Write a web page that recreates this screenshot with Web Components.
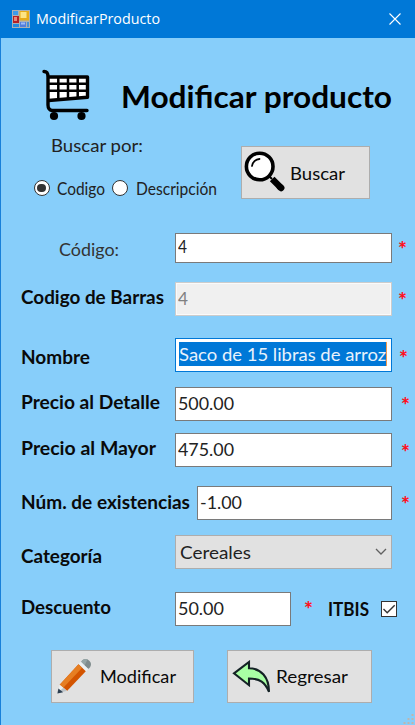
<!DOCTYPE html>
<html lang="es">
<head>
<meta charset="utf-8">
<title>ModificarProducto</title>
<style>
html,body{margin:0;height:100%;overflow:hidden;background:#87cefa}
body{font-family:Lato,"Open Sans",sans-serif;font-size:18px;color:#0a0a0a}
</style>
</head>
<body>
<product-window></product-window>
<script>
const define=(name,html,setup)=>{
  const tpl=document.createElement('template');
  tpl.innerHTML=html;
  customElements.define(name,class extends HTMLElement{
    constructor(){super();this.attachShadow({mode:'open'}).append(tpl.content.cloneNode(true));}
    connectedCallback(){if(setup)setup(this,this.shadowRoot);}
  });
};

/* Single-line text condensed or widened to the width in its "w" attribute. */
define('fit-label',`<style>
:host{display:block;flex:none;height:20px;line-height:20px;white-space:nowrap}
:host([bold]){font-weight:700}
span{display:inline-block;transform-origin:0 50%}
</style><span><slot></slot></span>`,(el,root)=>{
  const w=+el.getAttribute('w'),s=root.querySelector('span');
  el.style.width=w+'px';
  const n=s.offsetWidth?s.getBoundingClientRect().width:w;
  s.style.transform='scaleX('+w/n+')';
});

define('required-mark',`<style>
:host{display:block;flex:none;width:9px;height:20px;line-height:22px;color:#ff0f1c;font-size:21px;font-weight:900;text-align:center}
</style>*`);

define('text-field',`<style>
:host{display:flex;flex:none;box-sizing:border-box;height:34px;width:217px;border:1px solid #7a7a7a;background:#fff;padding:var(--pt,5px) 0 0 2px;color:#222}
:host([disabled]){background:#f0f0f0;border-color:#ccc;box-shadow:inset 0 0 0 1px #fafafa;color:#808080}
:host([selected]){border-color:#0078d7;padding:3px 0 0 3px}
:host([selected]) div{background:#0078d7;color:#e8f2fc;height:21px;padding:2px 0 1px;border-right:1px solid #f09a50}
</style><div><slot></slot></div>`);

define('combo-box',`<style>
:host{display:flex;flex:none;justify-content:space-between;box-sizing:border-box;height:34px;width:217px;border:1px solid #adadad;background:#e1e1e1;padding:6px 4px 0 4px;color:#222}
svg{margin-top:5px}
</style><slot></slot><svg width="12" height="10" viewBox="0 0 12 10"><path d="M1 2l5 5 5-5" fill="none" stroke="#606060" stroke-width="1.3"/></svg>`);

define('push-button',`<style>
:host{display:flex;flex:none;box-sizing:border-box;height:53px;border:1px solid #adadad;background:#e1e1e1}
</style><slot></slot>`);

define('radio-dot',`<style>
:host{display:block;flex:none;box-sizing:border-box;width:16px;height:16px;border:1.4px solid #333;border-radius:50%;background:#fff;padding:2.800px}
div{border-radius:50%;height:100%}
:host([checked]) div{background:#333}
</style><div></div>`);

define('check-box',`<style>
:host{display:block;flex:none;box-sizing:border-box;width:16px;height:16px;border:1px solid #333;background:#fff}
svg{display:block}
</style><svg width="14" height="14" viewBox="0 0 14 14"><path d="M1.500 7l3.700 3.700L12.700 3.200" fill="none" stroke="#333" stroke-width="1.400"/></svg>`);

define('form-row',`<style>
:host{display:flex;flex:none;align-items:flex-start;box-sizing:border-box}
</style><slot></slot>`);

define('title-bar',`<style>
:host{display:flex;flex:none;box-sizing:border-box;height:38px;background:#0078d7;color:#fff;align-items:center;padding:0 14px 0 12px;font-family:"Open Sans","Noto Sans",sans-serif;font-size:15px}
fit-label{margin:-2px auto 0 6px}
svg{display:block;flex:none}
</style>
<svg width="18" height="18" viewBox="0 0 18 18">
<rect width="18" height="18" fill="#a9b1b7"/><rect x="1" y="1" width="5" height="4" fill="#3c9bea"/><rect x="1" y="14" width="6" height="3" fill="#2389df"/>
<rect x="1" y="6" width="6" height="7" fill="#b51f24"/><rect x="2" y="7" width="3" height="4" fill="#e88678"/>
<rect x="7.500" y="1" width="9.500" height="9.500" fill="#e7ac16"/><rect x="8.500" y="2" width="6" height="6" fill="#fce483"/>
<rect x="8" y="12" width="6" height="5" fill="#527edc"/><rect x="9" y="12.500" width="4" height="2" fill="#9dbcf7"/><rect x="15" y="12" width="2" height="5" fill="#458fd7"/>
</svg>
<fit-label w="124">ModificarProducto</fit-label>
<svg width="12" height="12" viewBox="0 0 12 12"><path d="M.5.5l11 11M11.500.5l-11 11" stroke="#fff" stroke-width="1.100"/></svg>`);

define('cart-icon',`<style>:host{display:block;flex:none}svg{display:block}</style>
<svg width="48" height="52" viewBox="0 0 48 52" fill="none" stroke="#000">
<path d="M5.500 7.500H45V27.500L6.500 31.500z" fill="#fff" stroke="none"/>
<path d="M6 8H45.500V28.300L6.500 31.500" stroke-width="3.400" stroke-linejoin="round"/>
<path d="M7 14.800H45M7 21.700H45M16.300 8V31M26 8V30M35.700 8V29" stroke-width="2.500"/>
<path d="M2 2.500C5 2.500 6 4 6 8V36C6 39 7.500 41.500 10.500 41.500H45" stroke-width="3.400" stroke-linecap="round"/>
<circle cx="12" cy="47" r="4.100" fill="#000" stroke="none"/><circle cx="39.500" cy="47" r="4.100" fill="#000" stroke="none"/></svg>`);

define('search-icon',`<style>:host{display:block;flex:none}svg{display:block}</style>
<svg width="42" height="42" viewBox="0 0 42 42" fill="none" stroke="#000">
<circle cx="15.700" cy="15.500" r="13.300" fill="#fff" stroke-width="3.600"/>
<path d="M8 15A8 8 0 0 1 15.500 8" stroke-width="1.800" stroke-linecap="round"/>
<path d="M25 25l3 3" stroke-width="2"/><path d="M28.200 28l9 9" stroke-width="6.500"/><path d="M36 36l1.200 1" stroke-width="6.500" stroke-linecap="round"/></svg>`);

define('pencil-icon',`<style>:host{display:block;flex:none}svg{display:block}</style>
<svg width="35" height="36" viewBox="0 0 35 36">
<path d="M24 4.500C25 1 29 0 32 2.500S34.500 9 31 11z" fill="#7f8c8d"/><path d="M24 4.500C25 1.500 28 .3 30.500 1.500L27.500 7.800z" fill="#95a5a6"/>
<path d="M21.300 6l2.700-2.200 7.300 7.200-2.500 2.700z" fill="#ecf0f1"/>
<path d="M2.700 26.800L21.500 6.200l7.300 7L10 33z" fill="#d35400"/><path d="M2.700 26.800L21.500 6.200l3.700 3.500L6.300 29.800z" fill="#e67e22"/>
<path d="M2.700 26.800L.5 35.300 10 33 6.300 29.800z" fill="#ecf0f1"/><path d="M6.300 29.800L10 33 .5 35.300z" fill="#bdc3c7"/>
<path d="M1.400 30.500L.4 35.500l5.700-1.200z" fill="#2c3e50"/></svg>`);

define('back-icon',`<style>:host{display:block;flex:none}svg{display:block}</style>
<svg width="39" height="34" viewBox="0 0 39 34"><path d="M2 13.300L17 2V8.300C29 8.300 37 17 37 31.800 33 22 28 18.600 17 18.500V25.200z" fill="#a8ffa4" stroke="#142225" stroke-width="2.100" stroke-linejoin="miter"/></svg>`);

define('size-grip',`<style>
:host{position:absolute;right:1px;bottom:1px;display:block}svg{display:block}
</style><svg width="11" height="10" viewBox="0 0 11 10" fill="#bdb6b0"><path d="M8.500 0h2v2h-2zM4.500 4h2v2h-2zM8.500 4h2v2h-2zM.5 8h2v2h-2zM4.500 8h2v2h-2zM8.500 8h2v2h-2z"/></svg>`);

define('product-window',`<style>
:host{display:flex;flex-direction:column;position:relative;box-sizing:border-box;width:415px;height:725px;background:#87cefa}
main{display:flex;flex-direction:column;flex:1;border-left:1px solid #1880d9;min-height:0}
form-row{padding-left:20px}
form-row>text-field,form-row>combo-box{margin-left:auto}
.trail{width:23px;flex:none;display:flex}
.heading{font-size:31px;color:#000}
</style>
<title-bar></title-bar>
<main>
 <form-row style="height:91px;padding:31px 0 0 41px">
  <cart-icon></cart-icon>
  <fit-label bold w="271" class="heading" style="margin:17px 0 0 31px">Modificar producto</fit-label>
 </form-row>
 <form-row style="height:104px;padding:0">
  <div style="width:240px">
   <fit-label w="92" style="margin:6px 0 0 50px;color:#222">Buscar por:</fit-label>
   <form-row style="padding:0 0 0 32.500px;margin-top:25px;font-size:16.500px;color:#222">
    <radio-dot checked></radio-dot><fit-label w="48" style="margin:-1px 7px 0 7.500px">Codigo</fit-label>
    <radio-dot></radio-dot><fit-label w="81" style="margin:-1px 0 0 8px">Descripción</fit-label>
   </form-row>
  </div>
  <push-button style="width:129px;margin-top:17px"><search-icon style="margin:4px 0 0 2px"></search-icon><fit-label w="55" style="margin:16px 0 0 4px">Buscar</fit-label></push-button>
 </form-row>
 <form-row style="height:49px"><fit-label w="60" style="margin:6px 0 0 38px;color:#333">Código:</fit-label>
  <text-field style="height:30px;--pt:3px"><fit-label w="9" style="font-size:17px">4</fit-label></text-field><div class="trail"><required-mark style="margin:5px 0 0 6px"></required-mark></div></form-row>
 <form-row style="height:56px"><fit-label bold w="143" style="margin-top:5px">Codigo de Barras</fit-label>
  <text-field disabled><fit-label w="10">4</fit-label></text-field><div class="trail"><required-mark style="margin:7px 0 0 6px"></required-mark></div></form-row>
 <form-row style="height:49px"><fit-label bold w="69" style="margin-top:9px">Nombre</fit-label>
  <text-field selected><fit-label w="207">Saco de 15 libras de arroz</fit-label></text-field><div class="trail"><required-mark style="margin:9px 0 0 7px"></required-mark></div></form-row>
 <form-row style="height:46px"><fit-label bold w="139" style="margin-top:5px">Precio al Detalle</fit-label>
  <text-field><fit-label w="56">500.00</fit-label></text-field><div class="trail"><required-mark style="margin:7px 0 0 9px"></required-mark></div></form-row>
 <form-row style="height:53px"><fit-label bold w="135" style="margin-top:5px">Precio al Mayor</fit-label>
  <text-field><fit-label w="56">475.00</fit-label></text-field><div class="trail"><required-mark style="margin:8px 0 0 9px"></required-mark></div></form-row>
 <form-row style="height:49px"><fit-label bold w="169" style="margin-top:6px">Núm. de existencias</fit-label>
  <text-field style="width:195px"><fit-label w="42">-1.00</fit-label></text-field><div class="trail"><required-mark style="margin:7px 0 0 9px"></required-mark></div></form-row>
 <form-row style="height:57px"><fit-label bold w="81" style="margin-top:11px">Categoría</fit-label>
  <combo-box><fit-label w="71">Cereales</fit-label></combo-box><div class="trail"></div></form-row>
 <form-row style="height:58px"><fit-label bold w="90" style="margin-top:5px">Descuento</fit-label>
  <text-field style="width:116px"><fit-label w="46">50.00</fit-label></text-field>
  <required-mark style="margin:6px 0 0 13px"></required-mark><fit-label bold w="41" style="margin:7px 0 0 15px">ITBIS</fit-label><check-box style="margin:9px 18px 0 12px"></check-box></form-row>
 <form-row style="padding-left:50px">
  <push-button style="width:143px"><pencil-icon style="margin:7px 0 0 5px"></pencil-icon><fit-label w="76" style="margin:15px 0 0 8px">Modificar</fit-label></push-button>
  <push-button style="width:145px;margin-left:33px"><back-icon style="margin:9px 0 0 4px"></back-icon><fit-label w="72" style="margin:15px 0 0 5px">Regresar</fit-label></push-button>
 </form-row>
</main>
<size-grip></size-grip>`);
</script>
</body>
</html>
